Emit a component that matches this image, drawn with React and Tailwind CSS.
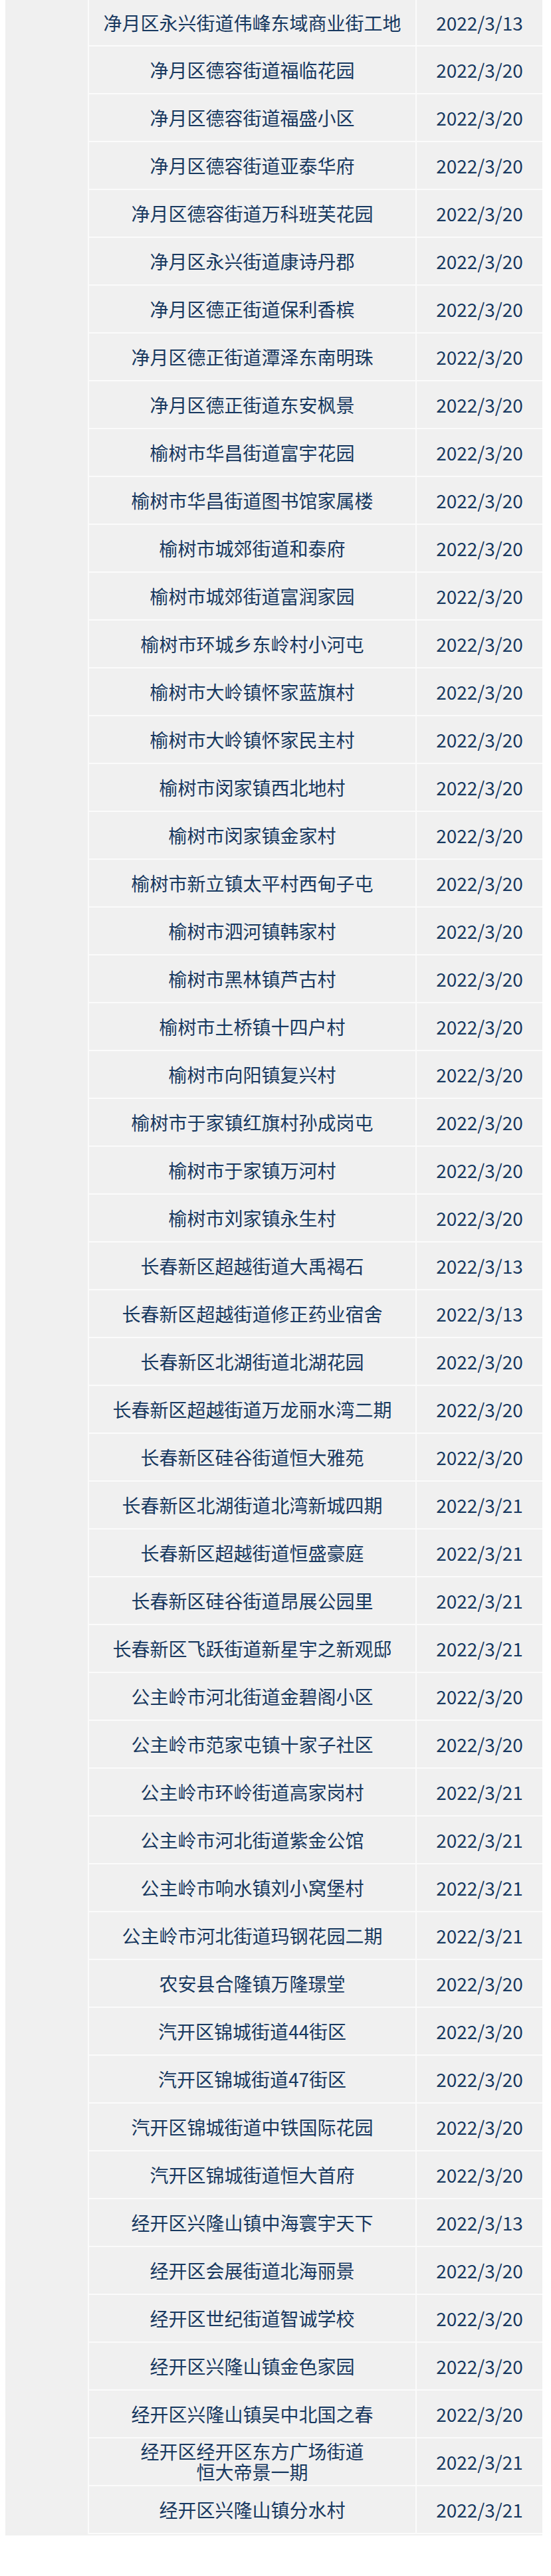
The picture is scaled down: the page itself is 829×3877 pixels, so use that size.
import React from "react";

const ROWS = [
  ["净月区永兴街道伟峰东域商业街工地", "2022/3/13"],
  ["净月区德容街道福临花园", "2022/3/20"],
  ["净月区德容街道福盛小区", "2022/3/20"],
  ["净月区德容街道亚泰华府", "2022/3/20"],
  ["净月区德容街道万科班芙花园", "2022/3/20"],
  ["净月区永兴街道康诗丹郡", "2022/3/20"],
  ["净月区德正街道保利香槟", "2022/3/20"],
  ["净月区德正街道潭泽东南明珠", "2022/3/20"],
  ["净月区德正街道东安枫景", "2022/3/20"],
  ["榆树市华昌街道富宇花园", "2022/3/20"],
  ["榆树市华昌街道图书馆家属楼", "2022/3/20"],
  ["榆树市城郊街道和泰府", "2022/3/20"],
  ["榆树市城郊街道富润家园", "2022/3/20"],
  ["榆树市环城乡东岭村小河屯", "2022/3/20"],
  ["榆树市大岭镇怀家蓝旗村", "2022/3/20"],
  ["榆树市大岭镇怀家民主村", "2022/3/20"],
  ["榆树市闵家镇西北地村", "2022/3/20"],
  ["榆树市闵家镇金家村", "2022/3/20"],
  ["榆树市新立镇太平村西甸子屯", "2022/3/20"],
  ["榆树市泗河镇韩家村", "2022/3/20"],
  ["榆树市黑林镇芦古村", "2022/3/20"],
  ["榆树市土桥镇十四户村", "2022/3/20"],
  ["榆树市向阳镇复兴村", "2022/3/20"],
  ["榆树市于家镇红旗村孙成岗屯", "2022/3/20"],
  ["榆树市于家镇万河村", "2022/3/20"],
  ["榆树市刘家镇永生村", "2022/3/20"],
  ["长春新区超越街道大禹褐石", "2022/3/13"],
  ["长春新区超越街道修正药业宿舍", "2022/3/13"],
  ["长春新区北湖街道北湖花园", "2022/3/20"],
  ["长春新区超越街道万龙丽水湾二期", "2022/3/20"],
  ["长春新区硅谷街道恒大雅苑", "2022/3/20"],
  ["长春新区北湖街道北湾新城四期", "2022/3/21"],
  ["长春新区超越街道恒盛豪庭", "2022/3/21"],
  ["长春新区硅谷街道昂展公园里", "2022/3/21"],
  ["长春新区飞跃街道新星宇之新观邸", "2022/3/21"],
  ["公主岭市河北街道金碧阁小区", "2022/3/20"],
  ["公主岭市范家屯镇十家子社区", "2022/3/20"],
  ["公主岭市环岭街道高家岗村", "2022/3/21"],
  ["公主岭市河北街道紫金公馆", "2022/3/21"],
  ["公主岭市响水镇刘小窝堡村", "2022/3/21"],
  ["公主岭市河北街道玛钢花园二期", "2022/3/21"],
  ["农安县合隆镇万隆璟堂", "2022/3/20"],
  ["汽开区锦城街道44街区", "2022/3/20"],
  ["汽开区锦城街道47街区", "2022/3/20"],
  ["汽开区锦城街道中铁国际花园", "2022/3/20"],
  ["汽开区锦城街道恒大首府", "2022/3/20"],
  ["经开区兴隆山镇中海寰宇天下", "2022/3/13"],
  ["经开区会展街道北海丽景", "2022/3/20"],
  ["经开区世纪街道智诚学校", "2022/3/20"],
  ["经开区兴隆山镇金色家园", "2022/3/20"],
  ["经开区兴隆山镇吴中北国之春", "2022/3/20"],
  [["经开区经开区东方广场街道", "恒大帝景一期"], "2022/3/21"],
  ["经开区兴隆山镇分水村", "2022/3/21"],
];

export default function App() {
  return (
    <div
      className="min-h-[3877px] bg-white"
      style={{ fontFamily: '"Noto Sans CJK SC", "Noto Sans", sans-serif' }}
    >
      <div className="ml-2 flex w-[808px] bg-[#f0f0f0] pb-[2px]">
        {/* merged first column, empty */}
        <div className="w-[126px] shrink-0 border-r-2 border-[#fbfbfb]" />

        <div className="flex-1">
          {ROWS.map(([place, date], i) => (
            <div
              key={i}
              className={
                "flex border-b-2 border-[#fbfbfb] text-[28px] text-[#17385f] " +
                (i === 0 ? "h-[70px]" : "h-[72px]")
              }
            >
              <div className="flex w-[493px] shrink-0 flex-col items-center justify-center border-r-2 border-[#fbfbfb] text-center">
                {Array.isArray(place) ? (
                  <>
                    <div className="leading-[31px]">{place[0]}</div>
                    <div className="leading-[31px]">{place[1]}</div>
                  </>
                ) : (
                  <div>{place}</div>
                )}
              </div>
              <div className="flex flex-1 items-center justify-center">{date}</div>
            </div>
          ))}
        </div>
      </div>
    </div>
  );
}
